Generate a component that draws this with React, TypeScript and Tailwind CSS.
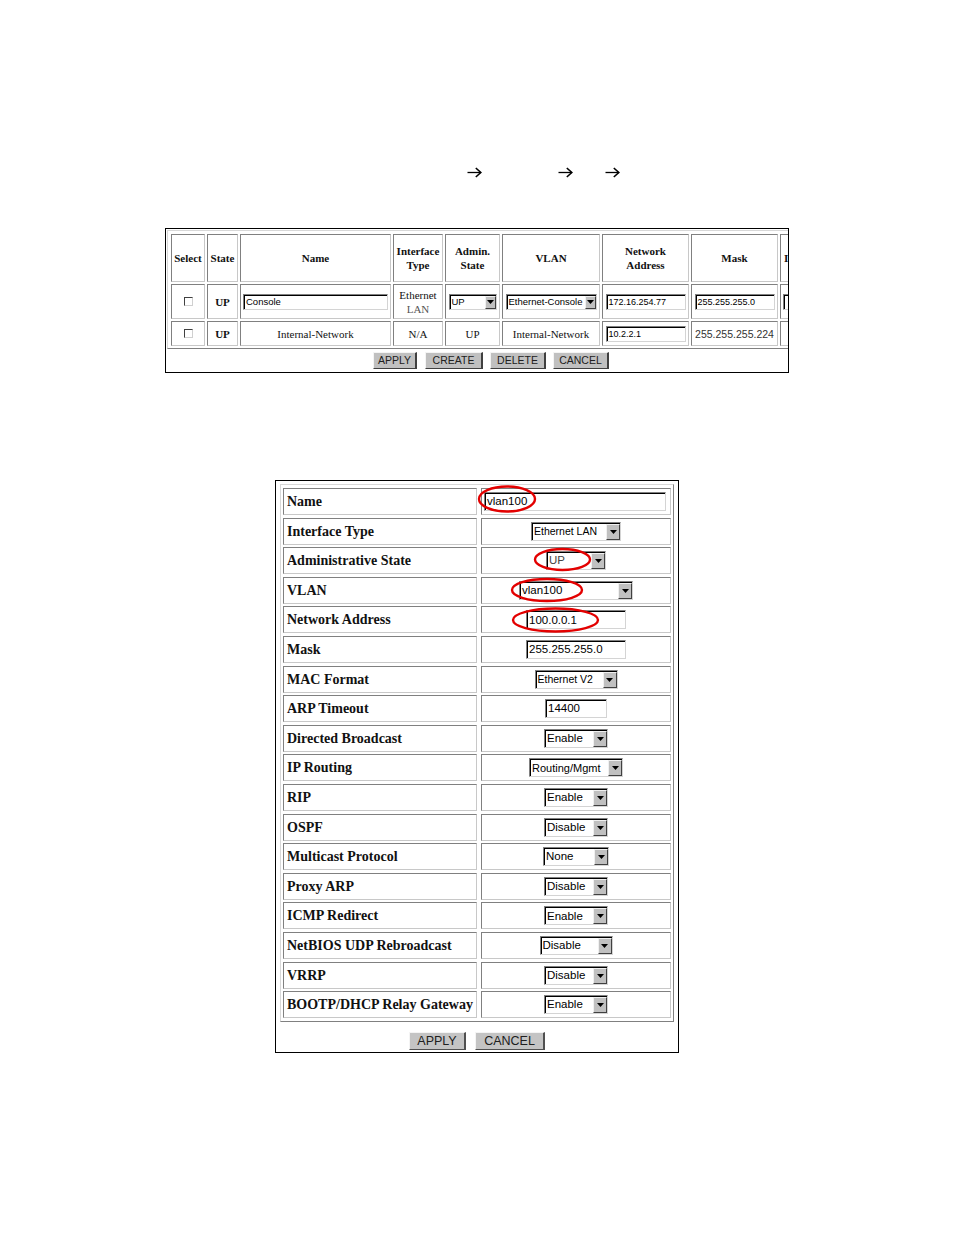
import React from "react";

const serif = "font-['Liberation_Serif',serif]";
const sans = "font-['Liberation_Sans',Arial,sans-serif]";

function Arrow({ cls }: { cls: string }) {
  return (
    <svg className={cls} width="15" height="11" viewBox="0 0 15 11">
      <path d="M0.5 5.5H13.6" stroke="#000" strokeWidth="1.3" />
      <path d="M8.8 1L13.8 5.5L8.8 10" fill="none" stroke="#000" strokeWidth="1.6" />
    </svg>
  );
}

type FP = {
  box: string;
  text: string;
  fs: string;
  select?: boolean;
  btn?: string;
  color?: string;
};

function Field({ box, text, fs, select, btn = "w-[12px]", color = "text-black" }: FP) {
  return (
    <div
      className={`${box} shrink-0 flex items-stretch bg-white border border-[#d4d4d4] border-t-[#808080] border-l-[#808080] shadow-[inset_1px_1px_0_#000] ${sans}`}
    >
      <span
        className={`flex-1 min-w-0 overflow-hidden whitespace-nowrap pl-[2px] pt-[1px] flex items-center leading-none ${fs} ${color}`}
      >
        {text}
      </span>
      {select && (
        <span
          className={`${btn} shrink-0 mt-[1px] mb-[0px] mr-[0px] bg-[#c0c0c0] border border-[#404040] border-t-[#f0f0f0] border-l-[#f0f0f0] flex items-center justify-center`}
        >
          <svg width="7" height="4" viewBox="0 0 7 4">
            <polygon points="0,0 7,0 3.5,4" fill="#000" />
          </svg>
        </span>
      )}
    </div>
  );
}

function Check() {
  return (
    <div className="w-[9px] h-[9px] bg-white border border-[#d0d0d0] border-t-[#404040] border-l-[#404040]" />
  );
}

const cellBorder =
  "border border-[#c8c8c8] border-t-[#808080] border-l-[#808080]";

function C({
  w,
  h,
  children,
  cls = "justify-center text-center",
}: {
  w: string;
  h: string;
  children?: React.ReactNode;
  cls?: string;
}) {
  return (
    <div className={`${w} ${h} shrink-0 ${cellBorder} flex items-center ${cls}`}>
      {children}
    </div>
  );
}

const W = [
  "w-[34px]",
  "w-[31px]",
  "w-[151px]",
  "w-[50px]",
  "w-[55px]",
  "w-[98px]",
  "w-[87px]",
  "w-[87px]",
  "w-[90px]",
];

function Btn1({ w, label }: { w: string; label: string }) {
  return (
    <div
      className={`${w} h-[17px] bg-[#c0c0c0] border border-[#404040] border-t-[#f4f4f4] border-l-[#f4f4f4] border-r-2 flex items-center justify-center text-[10.5px] text-[#202020] ${sans}`}
    >
      {label}
    </div>
  );
}

function Btn2({ w, label }: { w: string; label: string }) {
  return (
    <div
      className={`${w} h-[18px] bg-[#c4c4c4] border border-[#505050] border-t-[#f4f4f4] border-l-[#f4f4f4] border-r-2 flex items-center justify-center text-[12.5px] text-[#202020] ${sans}`}
    >
      {label}
    </div>
  );
}

function Table1() {
  const h1 = "h-[48px]";
  const h2 = "h-[35px]";
  const h3 = "h-[25px]";
  const fs = "text-[9.5px]";
  return (
    <div className="ml-[165px] mt-[50px] w-[624px] h-[145px] border border-black overflow-hidden bg-white">
      <div
        className={`ml-[1px] mt-[1px] w-max border border-[#808080] border-t-[#d8d8d8] border-l-[#d8d8d8] pt-[3px] pl-[3px] pr-[3px] pb-[2px] flex flex-col gap-[2px] ${serif} text-[11px] leading-[14px] text-[#111]`}
      >
        <div className="flex gap-[2px] font-bold">
          <C w={W[0]} h={h1}>Select</C>
          <C w={W[1]} h={h1}>State</C>
          <C w={W[2]} h={h1}>Name</C>
          <C w={W[3]} h={h1}>
            Interface
            <br />
            Type
          </C>
          <C w={W[4]} h={h1}>
            Admin.
            <br />
            State
          </C>
          <C w={W[5]} h={h1}>VLAN</C>
          <C w={W[6]} h={h1}>
            Network
            <br />
            Address
          </C>
          <C w={W[7]} h={h1}>Mask</C>
          <C w={W[8]} h={h1} cls="justify-start pl-[3px] whitespace-nowrap">
            IP Routing
          </C>
        </div>
        <div className="flex gap-[2px]">
          <C w={W[0]} h={h2}>
            <Check />
          </C>
          <C w={W[1]} h={h2}>
            <b>UP</b>
          </C>
          <C w={W[2]} h={h2}>
            <Field box="w-[145px] h-[16px]" text="Console" fs={fs} />
          </C>
          <C w={W[3]} h={h2}>
            <span>
              Ethernet
              <br />
              <span className="text-[#555]">LAN</span>
            </span>
          </C>
          <C w={W[4]} h={h2}>
            <Field box="w-[48px] h-[16px]" text="UP" fs={fs} select btn="w-[11px]" />
          </C>
          <C w={W[5]} h={h2}>
            <Field
              box="w-[91px] h-[16px]"
              text="Ethernet-Console"
              fs={fs}
              select
              btn="w-[11px]"
            />
          </C>
          <C w={W[6]} h={h2}>
            <Field box="w-[80px] h-[16px]" text="172.16.254.77" fs="text-[9px]" />
          </C>
          <C w={W[7]} h={h2}>
            <Field box="w-[80px] h-[16px]" text="255.255.255.0" fs="text-[9px]" />
          </C>
          <C w={W[8]} h={h2} cls="justify-start pl-[2px]">
            <Field box="w-[80px] h-[16px]" text="" fs="text-[9px]" />
          </C>
        </div>
        <div className="flex gap-[2px]">
          <C w={W[0]} h={h3}>
            <Check />
          </C>
          <C w={W[1]} h={h3}>
            <b>UP</b>
          </C>
          <C w={W[2]} h={h3}>Internal-Network</C>
          <C w={W[3]} h={h3}>N/A</C>
          <C w={W[4]} h={h3}>UP</C>
          <C w={W[5]} h={h3}>Internal-Network</C>
          <C w={W[6]} h={h3}>
            <Field box="w-[80px] h-[16px]" text="10.2.2.1" fs="text-[9px]" />
          </C>
          <C w={W[7]} h={h3}>
            <span className={`${sans} text-[10.5px] text-[#333]`}>255.255.255.224</span>
          </C>
          <C w={W[8]} h={h3} />
        </div>
      </div>
      <div className="mt-[3px] flex pl-[207px]">
        <Btn1 w="w-[44px]" label="APPLY" />
        <div className="ml-[8px]">
          <Btn1 w="w-[58px]" label="CREATE" />
        </div>
        <div className="ml-[7px]">
          <Btn1 w="w-[56px]" label="DELETE" />
        </div>
        <div className="ml-[7px]">
          <Btn1 w="w-[56px]" label="CANCEL" />
        </div>
      </div>
    </div>
  );
}

type Row = {
  label: string;
  kind: "full" | "input" | "select";
  box?: string;
  text: string;
  fs?: string;
  color?: string;
};

const rows: Row[] = [
  { label: "Name", kind: "full", text: "vlan100" },
  { label: "Interface Type", kind: "select", box: "w-[90px]", text: "Ethernet LAN", fs: "text-[10.5px]" },
  { label: "Administrative State", kind: "select", box: "w-[60px]", text: "UP", color: "text-[#444]" },
  { label: "VLAN", kind: "select", box: "w-[114px]", text: "vlan100" },
  { label: "Network Address", kind: "input", box: "w-[100px]", text: "100.0.0.1" },
  { label: "Mask", kind: "input", box: "w-[100px]", text: "255.255.255.0" },
  { label: "MAC Format", kind: "select", box: "w-[83px]", text: "Ethernet V2", fs: "text-[10.5px]" },
  { label: "ARP Timeout", kind: "input", box: "w-[62px]", text: "14400" },
  { label: "Directed Broadcast", kind: "select", box: "w-[64px]", text: "Enable" },
  { label: "IP Routing", kind: "select", box: "w-[94px]", text: "Routing/Mgmt", fs: "text-[11px]" },
  { label: "RIP", kind: "select", box: "w-[64px]", text: "Enable" },
  { label: "OSPF", kind: "select", box: "w-[64px]", text: "Disable" },
  { label: "Multicast Protocol", kind: "select", box: "w-[66px]", text: "None" },
  { label: "Proxy ARP", kind: "select", box: "w-[64px]", text: "Disable" },
  { label: "ICMP Redirect", kind: "select", box: "w-[64px]", text: "Enable" },
  { label: "NetBIOS UDP Rebroadcast", kind: "select", box: "w-[73px]", text: "Disable" },
  { label: "VRRP", kind: "select", box: "w-[64px]", text: "Disable" },
  { label: "BOOTP/DHCP Relay Gateway", kind: "select", box: "w-[64px]", text: "Enable" },
];

function Form2() {
  return (
    <div className="ml-[275px] mt-[107px] w-[404px] h-[573px] border border-black bg-white">
      <div
        className={`mt-[3px] ml-[4px] w-[394px] border border-[#808080] border-t-[#d8d8d8] border-l-[#d8d8d8] px-[2px] py-[3px] flex flex-col gap-[2.6px] ${serif}`}
      >
        {rows.map((r) => (
          <div key={r.label} className="flex gap-[4px]">
            <div
              className={`w-[194px] h-[27px] ${cellBorder} flex items-center pl-[3px] font-bold text-[14px] text-[#111] whitespace-nowrap`}
            >
              {r.label}
            </div>
            <div
              className={`w-[190px] h-[27px] ${cellBorder} flex items-center ${
                r.kind === "full" ? "justify-start pl-[2px]" : "justify-center"
              }`}
            >
              {r.kind === "full" ? (
                <Field box="w-[182px] h-[19px]" text={r.text} fs="text-[11.5px]" />
              ) : (
                <Field
                  box={`${r.box} h-[19px]`}
                  text={r.text}
                  fs={r.fs ?? "text-[11.5px]"}
                  select={r.kind === "select"}
                  btn="w-[14px]"
                  color={r.color ?? "text-black"}
                />
              )}
            </div>
          </div>
        ))}
      </div>
      <div className="mt-[10px] flex justify-center gap-[9px]">
        <Btn2 w="w-[57px]" label="APPLY" />
        <Btn2 w="w-[70px]" label="CANCEL" />
      </div>
    </div>
  );
}

export default function App() {
  return (
    <div className="relative w-[954px] h-[1235px] bg-white overflow-hidden">
      <div className="pt-[167px] flex h-[178px] items-start">
        <Arrow cls="ml-[467px]" />
        <Arrow cls="ml-[76px]" />
        <Arrow cls="ml-[32px]" />
      </div>
      <Table1 />
      <Form2 />
      <svg
        className="absolute left-0 top-0 pointer-events-none"
        width="954"
        height="1235"
        viewBox="0 0 954 1235"
      >
        <g fill="none" stroke="#e30000" strokeWidth="2.4">
          <ellipse cx="507" cy="499" rx="28" ry="12.5" />
          <ellipse cx="562.5" cy="559.5" rx="27.5" ry="10.5" />
          <ellipse cx="547" cy="590" rx="35" ry="11" />
          <ellipse cx="555.5" cy="620" rx="42.5" ry="11.5" />
        </g>
      </svg>
    </div>
  );
}
